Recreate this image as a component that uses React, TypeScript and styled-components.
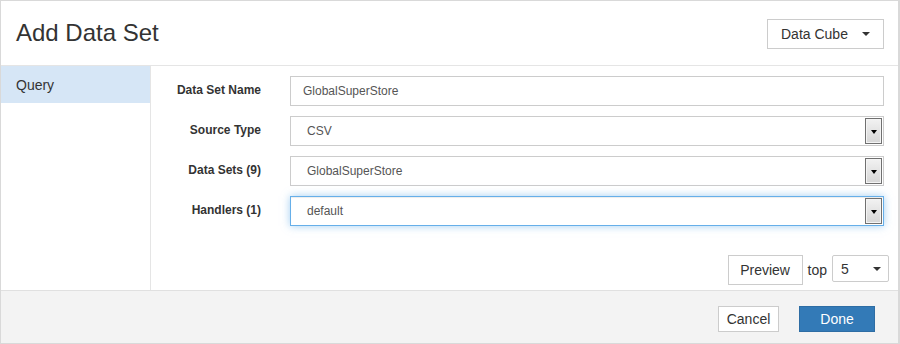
import React from "react";
import styled, { createGlobalStyle } from "styled-components";

const GlobalStyle = createGlobalStyle`
    html, body {
        margin: 0;
        padding: 0;
        background: #fff;
    }
    * {
        box-sizing: border-box;
    }
    body {
        font-family: "Liberation Sans", Arial, sans-serif;
        color: #333;
    }
`;

const Dialog = styled.div`
    width: 900px;
    height: 344px;
    border: 1px solid #d9d9d9;
    border-right-width: 2px;
    display: flex;
    flex-direction: column;
`;

const Header = styled.div`
    height: 65px;
    flex: none;
    display: flex;
    align-items: center;
    justify-content: space-between;
    padding: 0 14px 0 15px;
    border-bottom: 1px solid #e5e5e5;
`;

const Title = styled.h1`
    margin: 0;
    font-size: 24px;
    font-weight: normal;
    color: #333;
`;

const Caret = styled.span<{ size?: number }>`
    display: inline-block;
    width: 0;
    height: 0;
    border-left: ${(p) => p.size ?? 4}px solid transparent;
    border-right: ${(p) => p.size ?? 4}px solid transparent;
    border-top: ${(p) => p.size ?? 4}px solid #333;
`;

const CubeButton = styled.button`
    width: 117px;
    height: 30px;
    margin-top: 1px;
    display: flex;
    align-items: center;
    justify-content: space-between;
    padding: 0 13px 0 13px;
    background: #fff;
    border: 1px solid #ccc;
    font-family: inherit;
    font-size: 14px;
    color: #333;
`;

const Body = styled.div`
    flex: 1;
    display: flex;
    min-height: 0;
`;

const Sidebar = styled.div`
    width: 150px;
    flex: none;
    border-right: 1px solid #e5e5e5;
`;

const NavItem = styled.div<{ active?: boolean }>`
    height: 37px;
    padding: 11px 15px;
    font-size: 14px;
    background: ${(p) => (p.active ? "#d6e6f6" : "transparent")};
    color: #333;
`;

const Main = styled.div`
    flex: 1;
    display: flex;
    flex-direction: column;
    padding: 10px 0 0 0;
`;

const Form = styled.div`
    display: grid;
    grid-template-columns: 110px 1fr;
    column-gap: 29px;
    row-gap: 10px;
    padding-right: 14px;
    align-items: center;
`;

const Label = styled.label`
    text-align: right;
    font-size: 12px;
    font-weight: bold;
    color: #333;
    margin-top: -2px;
`;

const Field = styled.div<{ focused?: boolean; select?: boolean }>`
    height: 30px;
    display: flex;
    align-items: center;
    justify-content: space-between;
    padding: 1px 1px 1px ${(p) => (p.select ? 16 : 12)}px;
    border: 1px solid ${(p) => (p.focused ? "#66afe9" : "#ccc")};
    box-shadow: ${(p) =>
        p.focused
            ? "inset 0 1px 1px rgba(0,0,0,.075), 0 0 8px rgba(102,175,233,.6)"
            : "none"};
    font-size: 12px;
    color: #555;
`;

const ArrowBox = styled.div`
    width: 17px;
    height: 100%;
    display: flex;
    align-items: center;
    justify-content: center;
    border: 1px solid #707070;
    box-shadow: inset 0 0 0 1px #f4f4f4;
    background: linear-gradient(#f2f2f2, #d6d6d6);
`;

const SmallCaret = styled.span`
    display: inline-block;
    width: 0;
    height: 0;
    border-left: 3.5px solid transparent;
    border-right: 3.5px solid transparent;
    border-top: 4px solid #000;
    margin-top: 1px;
`;

const PreviewRow = styled.div`
    margin-top: auto;
    display: flex;
    align-items: center;
    justify-content: flex-end;
    gap: 5px;
    padding: 0 9px 5px 0;
`;

const Button = styled.button<{ primary?: boolean; w: number; h: number }>`
    width: ${(p) => p.w}px;
    height: ${(p) => p.h}px;
    padding: 0;
    font-family: inherit;
    font-size: 14px;
    color: ${(p) => (p.primary ? "#fff" : "#333")};
    background: ${(p) => (p.primary ? "#337ab7" : "#fff")};
    border: 1px solid ${(p) => (p.primary ? "#2e6da4" : "#ccc")};
`;

const TopText = styled.span`
    font-size: 14px;
    color: #333;
`;

const TopSelect = styled.div`
    width: 57px;
    height: 27px;
    margin-top: -3px;
    display: flex;
    align-items: center;
    justify-content: space-between;
    padding: 0 7px 0 8px;
    border: 1px solid #ccc;
    border-radius: 2px;
    font-size: 14px;
    color: #333;
`;

const Footer = styled.div`
    height: 53px;
    flex: none;
    display: flex;
    align-items: center;
    justify-content: flex-end;
    gap: 20px;
    padding: 4px 23px 0 0;
    background: #f3f3f3;
    border-top: 1px solid #e0e0e0;
`;

const SelectField = ({ value, focused }: { value: string; focused?: boolean }) => (
    <Field select focused={focused}>
        {value}
        <ArrowBox>
            <SmallCaret />
        </ArrowBox>
    </Field>
);

const App = () => {
    return (
        <>
            <GlobalStyle />
            <Dialog>
                <Header>
                    <Title>Add Data Set</Title>
                    <CubeButton>
                        Data Cube <Caret />
                    </CubeButton>
                </Header>
                <Body>
                    <Sidebar>
                        <NavItem active>Query</NavItem>
                    </Sidebar>
                    <Main>
                        <Form>
                            <Label>Data Set Name</Label>
                            <Field>GlobalSuperStore</Field>
                            <Label>Source Type</Label>
                            <SelectField value="CSV" />
                            <Label>Data Sets (9)</Label>
                            <SelectField value="GlobalSuperStore" />
                            <Label>Handlers (1)</Label>
                            <SelectField value="default" focused />
                        </Form>
                        <PreviewRow>
                            <Button w={75} h={30}>Preview</Button>
                            <TopText>top</TopText>
                            <TopSelect>
                                5 <Caret />
                            </TopSelect>
                        </PreviewRow>
                    </Main>
                </Body>
                <Footer>
                    <Button w={61} h={26}>Cancel</Button>
                    <Button primary w={76} h={26}>Done</Button>
                </Footer>
            </Dialog>
        </>
    );
};

export default App;
